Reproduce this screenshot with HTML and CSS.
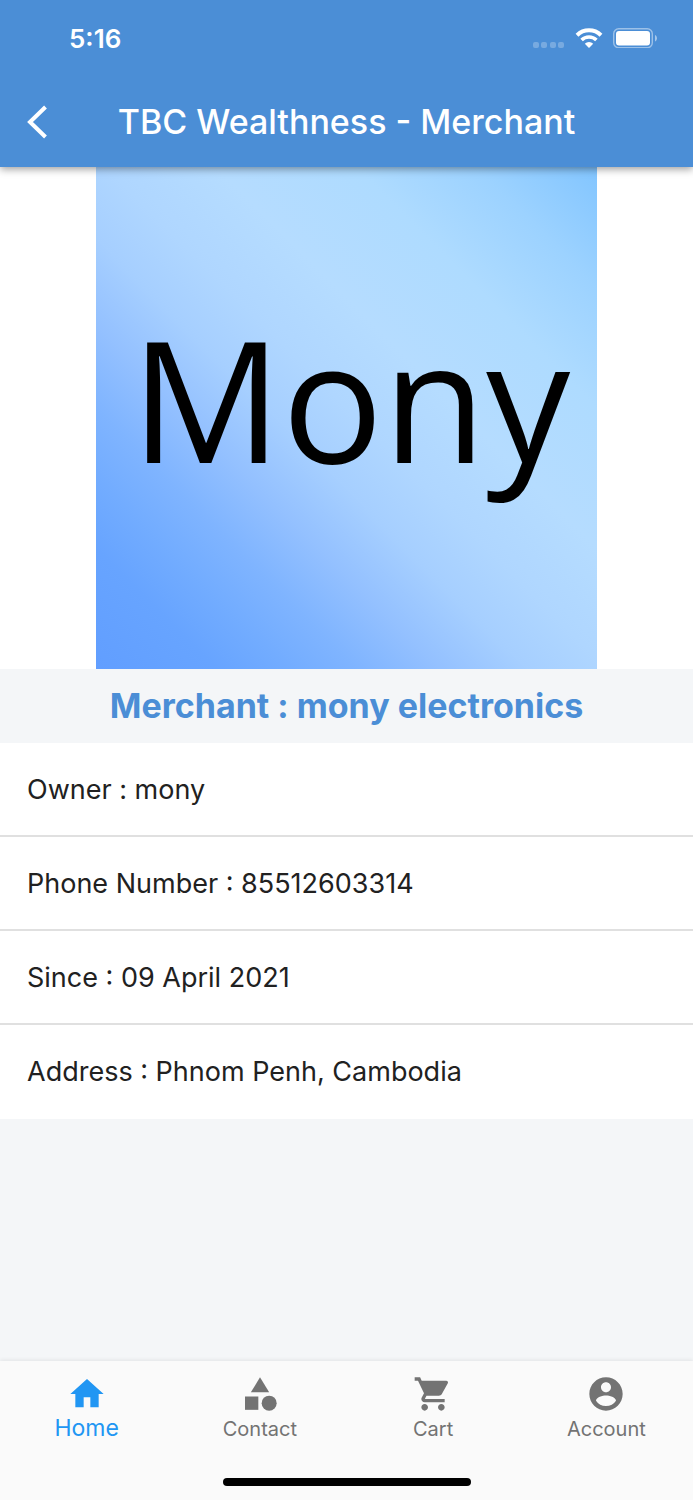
FILE: index.html
```
<!DOCTYPE html>
<html lang="en">
<head>
    <meta charset="UTF-8">
    <meta name="viewport" content="width=device-width, initial-scale=1.0">
    <title>TBC Wealthness - Merchant</title>
    <link rel="stylesheet" href="styles.css">
</head>
<body>
    <header class="app-header">
        <div class="status-bar">
            <span class="status-time">5:16</span>
            <div class="status-icons">
                <svg class="signal" viewBox="0 0 32 20" aria-hidden="true">
                    <rect x="0" y="14" width="6" height="6" rx="2"/>
                    <rect x="8" y="14" width="6" height="6" rx="2"/>
                    <rect x="17" y="14" width="6" height="6" rx="2"/>
                    <rect x="25" y="14" width="6" height="6" rx="2"/>
                </svg>
                <svg class="wifi" viewBox="0 0 28 20" aria-hidden="true">
                    <path d="M2 7.2a17.2 17.2 0 0 1 24 0" stroke-width="4"/>
                    <path d="M6.6 12a10.6 10.6 0 0 1 14.8 0" stroke-width="3.6"/>
                    <path d="M9.8 15.7a6 6 0 0 1 8.4 0L14 20z" class="wifi-dot"/>
                </svg>
                <svg class="battery" viewBox="0 0 44 20" aria-hidden="true">
                    <rect x=".7" y=".7" width="38.6" height="19" rx="5" class="battery-case"/>
                    <rect x="3" y="3" width="34" height="14.4" rx="3" fill="#fff"/>
                    <path d="M42 7c2.600 1 2.600 5.600 0 6.600z" class="battery-tip"/>
                </svg>
            </div>
        </div>
        <div class="title-bar">
            <button class="back-btn" type="button" aria-label="Back">
                <svg viewBox="0 0 22 34" aria-hidden="true"><path d="M19.500 2L4 17l15.500 15"/></svg>
            </button>
            <h1>TBC Wealthness - Merchant</h1>
        </div>
    </header>

    <main>
        <div class="banner">
            <div class="merchant-logo">Mony</div>
        </div>
        <h2 class="merchant-name">Merchant : mony electronics</h2>
        <ul class="merchant-details">
            <li>Owner : mony</li>
            <li>Phone Number : 85512603314</li>
            <li>Since : 09 April 2021</li>
            <li>Address : Phnom Penh, Cambodia</li>
        </ul>
    </main>

    <nav class="bottom-nav">
        <div class="tabs">
            <a href="#home" class="tab active">
                <svg viewBox="0 0 24 24" aria-hidden="true"><path d="M10 20v-6h4v6h5v-8h3L12 3 2 12h3v8z"/></svg>
                <span>Home</span>
            </a>
            <a href="#contact" class="tab">
                <svg viewBox="0 0 24 24" aria-hidden="true"><path d="M12 2l-5.500 9h11z"/><circle cx="17.500" cy="17.500" r="4.500"/><path d="M3 13.500h8v8H3z"/></svg>
                <span>Contact</span>
            </a>
            <a href="#cart" class="tab">
                <svg viewBox="0 0 24 24" aria-hidden="true"><path d="M7 18c-1.100 0-1.990.9-1.990 2S5.900 22 7 22s2-.9 2-2-.9-2-2-2zM1 2v2h2l3.600 7.590-1.350 2.450c-.16.28-.25.61-.25.96 0 1.100.9 2 2 2h12v-2H7.420c-.14 0-.25-.11-.25-.25l.03-.12.9-1.630h7.450c.75 0 1.410-.41 1.750-1.030l3.580-6.490c.08-.14.12-.31.12-.48 0-.55-.45-1-1-1H5.210l-.94-2H1zm16 16c-1.100 0-1.990.9-1.990 2s.89 2 1.990 2 2-.9 2-2-.9-2-2-2z"/></svg>
                <span>Cart</span>
            </a>
            <a href="#account" class="tab">
                <svg viewBox="0 0 24 24" aria-hidden="true"><path d="M12 2C6.480 2 2 6.480 2 12s4.480 10 10 10 10-4.480 10-10S17.520 2 12 2zm0 3c1.660 0 3 1.340 3 3s-1.340 3-3 3-3-1.340-3-3 1.340-3 3-3zm0 14.200c-2.500 0-4.710-1.280-6-3.220.03-1.990 4-3.080 6-3.080 1.990 0 5.970 1.090 6 3.080-1.290 1.940-3.500 3.220-6 3.220z"/></svg>
                <span>Account</span>
            </a>
        </div>
        <div class="home-indicator"></div>
    </nav>
</body>
</html>
```
FILE: styles.css
```
* {
    box-sizing: border-box;
}

body {
    font-family: Inter, "Liberation Sans", sans-serif;
    margin: 0;
    min-height: 100vh;
    display: flex;
    flex-direction: column;
    background-color: #f4f6f8;
    color: #212121;
}

.app-header {
    position: relative;
    background-color: #4b8ed6;
    color: white;
    box-shadow: 0 2px 8px rgba(0,0,0,0.4);
}

.status-bar {
    display: flex;
    align-items: center;
    justify-content: space-between;
    height: 76px;
    padding: 0 36px 0 69px;
}

.status-time {
    font-size: 26px;
    font-weight: 600;
}

.status-icons {
    display: flex;
    align-items: center;
    gap: 10px;
}

.status-icons svg {
    display: block;
    height: 20px;
}

.signal {
    width: 32px;
    fill: rgba(255,255,255,0.25);
}

.wifi {
    width: 28px;
    fill: none;
    stroke: white;
}

.wifi-dot {
    fill: white;
    stroke: none;
}

.battery {
    width: 44px;
}

.battery-case {
    fill: none;
    stroke: rgba(255,255,255,0.45);
    stroke-width: 1.4;
}

.battery-tip {
    fill: rgba(255,255,255,0.5);
}

.title-bar {
    display: grid;
    grid-template-columns: 64px 1fr 64px;
    align-items: center;
    height: 91px;
}

.back-btn {
    display: flex;
    padding: 0 0 0 26px;
    border: none;
    background: none;
    cursor: pointer;
}

.back-btn svg {
    width: 22px;
    height: 34px;
    fill: none;
    stroke: white;
    stroke-width: 4;
}

h1 {
    margin: 0;
    font-size: 34px;
    font-weight: 500;
    line-height: 40px;
    text-align: center;
}

.banner {
    display: flex;
    justify-content: center;
    background: white;
}

.merchant-logo {
    display: flex;
    align-items: center;
    justify-content: center;
    width: 72.4%;
    aspect-ratio: 1;
    padding: 0 0 40px 8px;
    background: linear-gradient(45deg, #619eff 0%, #67a4ff 12%, #72acff 19%, #7fb4ff 26%, #93c0ff 34%, #a6cfff 43%, #afd6ff 51%, #b5dcff 62%, #aedbff 76%, #9cd2ff 88%, #82c5ff 100%);
    color: black;
    font-family: "Open Sans", "Noto Sans", sans-serif;
    font-size: 168px;
    font-weight: 500;
    line-height: 1;
}

.merchant-name {
    margin: 0;
    padding: 16px;
    color: #4b8ed6;
    font-size: 34px;
    font-weight: 700;
    line-height: 42px;
    text-align: center;
}

.merchant-details {
    margin: 0;
    padding: 0;
    list-style: none;
    background: white;
}

.merchant-details li {
    padding: 31px 27px 29px;
    border-bottom: 2px solid #e0e0e0;
    font-size: 27px;
    line-height: 32px;
}

.merchant-details li:last-child {
    border-bottom-color: white;
}

.bottom-nav {
    margin-top: auto;
    background: #fafafa;
    box-shadow: 0 -1px 4px rgba(0,0,0,0.08);
}

.tabs {
    display: grid;
    grid-template-columns: repeat(4, 1fr);
    padding-top: 13px;
}

.tab {
    display: flex;
    flex-direction: column;
    align-items: center;
    color: #737373;
    font-size: 20px;
    line-height: 30px;
    text-decoration: none;
}

.tab svg {
    width: 40px;
    height: 40px;
    fill: currentColor;
}

.tab.active {
    color: #2196f3;
    font-size: 23px;
    line-height: 28px;
}

.home-indicator {
    width: 248px;
    height: 8px;
    margin: 34px auto 14px;
    border-radius: 4px;
    background: black;
}
```
